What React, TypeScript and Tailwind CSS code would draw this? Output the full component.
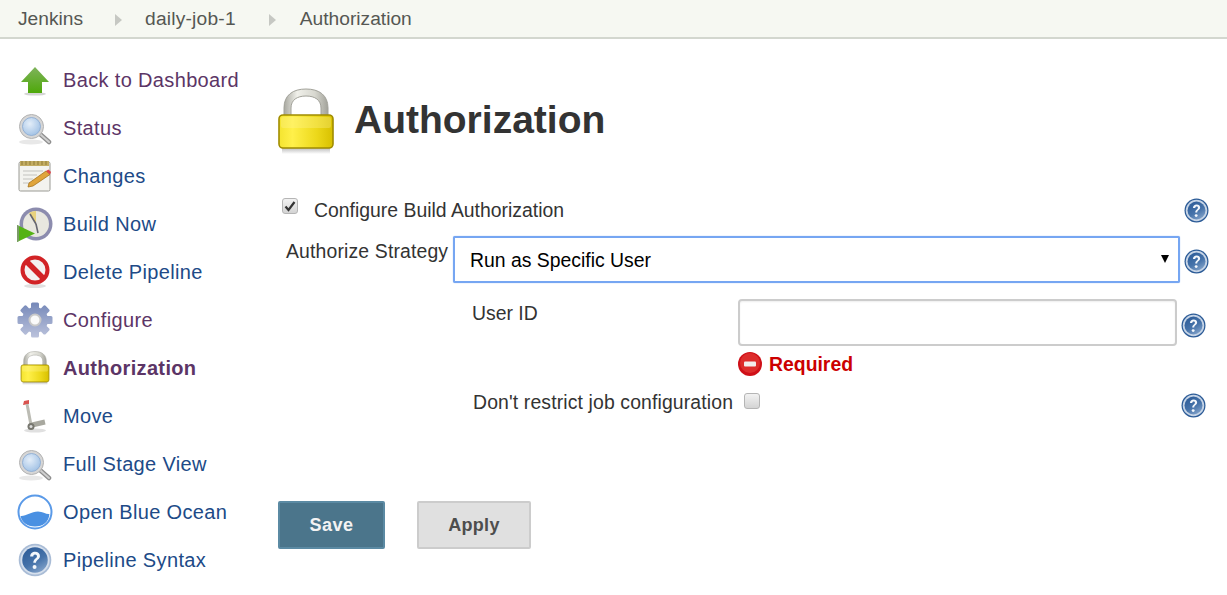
import type { ReactNode } from 'react'

function HelpIcon({ size = 25, soft }: { size?: number; soft?: boolean }) {
    return (
        <svg width={size} height={size} viewBox="0 0 24 24" className="shrink-0 blur-[0.3px]">
            <defs>
                <linearGradient id="helpFill" x1="0.2" x2="0.8" y1="0" y2="1">
                    <stop offset="0%" stopColor="#2d5c98" />
                    <stop offset="55%" stopColor="#4673aa" />
                    <stop offset="100%" stopColor="#86a5cb" />
                </linearGradient>
            </defs>
            <circle cx="12" cy="12" r="11.5" fill={soft ? '#a9bcd6' : '#2a5a96'} />
            <circle cx="12" cy="12" r="10.3" fill={soft ? '#d5dfec' : '#c6d4e6'} />
            <circle cx="12" cy="12" r={soft ? 9 : 8.6} fill="url(#helpFill)" />
            <path
                d="M8.6 9.6c0-2.1 1.5-3.4 3.5-3.4s3.4 1.2 3.4 3c0 2.5-2.8 2.6-2.8 4.8H10.8c0-3 2.6-3.1 2.6-4.7 0-.7-.6-1.2-1.3-1.2-.8 0-1.3.6-1.3 1.5z"
                fill="#f4f7fb"
            />
            <circle cx="11.7" cy="16.9" r="1.4" fill="#f4f7fb" />
        </svg>
    )
}

function LockIcon({ className, id }: { className: string; id: string }) {
    return (
        <svg viewBox="0 0 56 66" className={className}>
            <defs>
                <linearGradient id={`${id}-body`} x1="0" x2="1" y1="0" y2="0">
                    <stop offset="0%" stopColor="#f4e430" />
                    <stop offset="25%" stopColor="#fff04a" />
                    <stop offset="70%" stopColor="#ecd81a" />
                    <stop offset="100%" stopColor="#d8c000" />
                </linearGradient>
                <linearGradient id={`${id}-shackle`} x1="0" x2="1" y1="0" y2="0">
                    <stop offset="0%" stopColor="#a8a8a0" />
                    <stop offset="30%" stopColor="#f0f0ea" />
                    <stop offset="70%" stopColor="#d8d8d0" />
                    <stop offset="100%" stopColor="#a2a29a" />
                </linearGradient>
                <linearGradient id={`${id}-shadow`} x1="0" x2="0" y1="0" y2="1">
                    <stop offset="0%" stopColor="#bdbdbd" />
                    <stop offset="100%" stopColor="#ffffff" />
                </linearGradient>
            </defs>
            <path
                d="M6 30V20C6 7 15 1 28 1s22 6 22 19v10h-7V20c0-8-6-12-15-12s-15 4-15 12v10z"
                fill={`url(#${id}-shackle)`}
                stroke="#a2a29a"
                strokeWidth="1"
            />
            <rect x="4" y="60" width="48" height="6" fill={`url(#${id}-shadow)`} />
            <rect x="1" y="27" width="54" height="33" rx="4" fill={`url(#${id}-body)`} stroke="#a08c00" strokeWidth="1.6" />
            <rect x="3" y="29" width="50" height="11" rx="2" fill="#fff6a0" opacity="0.3" />
        </svg>
    )
}

function ArrowIcon() {
    return (
        <svg width="32" height="32" viewBox="0 0 32 32" className="blur-[0.3px]">
            <defs>
                <linearGradient id="arrowFill" x1="0" x2="0" y1="0" y2="1">
                    <stop offset="0%" stopColor="#7fb35c" />
                    <stop offset="100%" stopColor="#4ea809" />
                </linearGradient>
            </defs>
            <ellipse cx="16" cy="30" rx="11" ry="1.6" fill="#d4d4d4" />
            <path d="M16 3 L30 18 H23 V29 H9 V18 H2 Z" fill="url(#arrowFill)" />
        </svg>
    )
}

function SearchIcon({ id }: { id: string }) {
    return (
        <svg width="34" height="34" viewBox="0 0 34 34" className="blur-[0.3px]">
            <defs>
                <radialGradient id={id} cx="40%" cy="35%" r="65%">
                    <stop offset="0%" stopColor="#e4eef9" />
                    <stop offset="100%" stopColor="#a5c4e6" />
                </radialGradient>
            </defs>
            <ellipse cx="13" cy="31" rx="12" ry="2.5" fill="#e8e8e8" />
            <path d="M22 23 L31 31" stroke="#8f8f8f" strokeWidth="4.5" strokeLinecap="round" />
            <path d="M22 23 L31 31" stroke="#cfcfcf" strokeWidth="2" strokeLinecap="round" />
            <circle cx="13.5" cy="15.5" r="12" fill="#d6d6d6" stroke="#b2b2b2" strokeWidth="1" />
            <circle cx="13.5" cy="15.5" r="9" fill={`url(#${id})`} stroke="#86a8d2" strokeWidth="0.8" />
        </svg>
    )
}

function NotepadIcon() {
    return (
        <svg width="34" height="34" viewBox="0 0 34 34" className="blur-[0.3px]">
            <rect x="1" y="3" width="31" height="29" rx="1.5" fill="#f3f3ef" stroke="#9a9a94" />
            <rect x="2" y="2" width="29" height="5" fill="#c2ac62" />
            <path d="M4 2v4M8 2v4M12 2v4M16 2v4M20 2v4M24 2v4M28 2v4" stroke="#8f7a34" strokeWidth="1" />
            <path d="M5 12h20M5 16h14M5 20h10M5 24h8" stroke="#c4c4c0" strokeWidth="1.2" />
            <path d="M11 24 L28 12 L32 15.5 L15 27 L10 28 Z" fill="#e0a53c" stroke="#a7741c" strokeWidth="0.8" />
            <path d="M28 12 L32 15.5 L33 13 L30.5 10.5 Z" fill="#e0454a" />
        </svg>
    )
}

function BuildIcon() {
    return (
        <svg width="36" height="36" viewBox="0 0 36 36" className="blur-[0.3px]">
            <circle cx="19" cy="18" r="16.5" fill="#8c8cae" />
            <circle cx="19" cy="18" r="13" fill="#e8e7df" />
            <path d="M19 18 L12 7 A13 13 0 0 1 19 5 Z" fill="#e8d27e" />
            <path d="M19 18 L13 8 M19 18 L21 27" stroke="#666670" strokeWidth="1.6" />
            <path d="M0 19 L18 27.5 L0 36 Z" fill="#55b216" />
            <path d="M0 19 L0 36 L2 35 L2 20 Z" fill="#7a9a68" />
        </svg>
    )
}

function NoIcon() {
    return (
        <svg width="34" height="34" viewBox="0 0 34 34" className="blur-[0.3px]">
            <ellipse cx="17" cy="31" rx="11" ry="2" fill="#e0e0e0" />
            <circle cx="17" cy="15" r="12.5" fill="#f4f1f0" stroke="#d22326" strokeWidth="4" />
            <path d="M8 6 L26 24" stroke="#d22326" strokeWidth="5.5" />
        </svg>
    )
}

function GearIcon() {
    const teeth = [0, 45, 90, 135]
    return (
        <svg width="36" height="36" viewBox="0 0 36 36" className="blur-[0.3px]">
            <defs>
                <linearGradient id="gearFill" x1="0" x2="0" y1="0" y2="1">
                    <stop offset="0%" stopColor="#7487b8" />
                    <stop offset="100%" stopColor="#bcc3dc" />
                </linearGradient>
                <clipPath id="gearShape">
                    <circle cx="18" cy="18" r="13" />
                    {teeth.map((deg) => (
                        <rect key={deg} x="14" y="0.5" width="8" height="35" rx="1.5" transform={`rotate(${deg} 18 18)`} />
                    ))}
                </clipPath>
            </defs>
            <rect width="36" height="36" fill="url(#gearFill)" clipPath="url(#gearShape)" />
            <circle cx="18" cy="18" r="5.5" fill="#fafafa" stroke="#c9c9c9" strokeWidth="2" />
        </svg>
    )
}

function MoveIcon() {
    return (
        <svg width="30" height="34" viewBox="0 0 30 34" className="blur-[0.3px]">
            <path d="M4 2 L9 1 L9 5 L3 6 Z" fill="#d9534f" />
            <path d="M7 5 L11 26" stroke="#bcbcb4" strokeWidth="3" />
            <path d="M12 26 L25 23" stroke="#a8a89f" strokeWidth="5" />
            <ellipse cx="15" cy="31.5" rx="11" ry="2" fill="#e0e0e0" />
            <circle cx="11" cy="27.5" r="3.5" fill="#77776f" />
            <circle cx="11" cy="27.5" r="1.5" fill="#ddd" />
        </svg>
    )
}

function OceanIcon() {
    return (
        <svg width="36" height="36" viewBox="0 0 36 36">
            <circle cx="18" cy="18" r="16.5" fill="#fff" stroke="#5a9ae8" strokeWidth="2" />
            <path d="M3.6 22 C9 22.5 14 17.5 21 17.5 C26 17.5 29 20.5 32.4 20 C32 28 26 32.5 18 32.5 C10 32.5 4.5 28 3.6 22 Z" fill="#4a90e2" />
        </svg>
    )
}

function RedMinus() {
    return (
        <svg width="24" height="24" viewBox="0 0 24 24" className="shrink-0">
            <circle cx="12" cy="12" r="12" fill="#cf1018" />
            <circle cx="12" cy="11" r="10" fill="#dd2c2c" />
            <rect x="6" y="9.5" width="12" height="5" rx="1" fill="#f3eded" />
        </svg>
    )
}

function Checkbox({ checked }: { checked?: boolean }) {
    return (
        <span className="flex h-[16px] w-[16px] shrink-0 -translate-y-[4px] items-center justify-center rounded-[3px] border border-[#b5b5b5] bg-gradient-to-b from-[#f2f2f2] to-[#d4d4d4]">
            {checked && (
                <svg width="12" height="12" viewBox="0 0 12 12">
                    <path d="M1.5 6.5 L4.5 10 L10.5 2" fill="none" stroke="#333" strokeWidth="2.2" />
                </svg>
            )}
        </span>
    )
}

const navItems: { label: string; icon: ReactNode; color: string; bold?: boolean }[] = [
    { label: 'Back to Dashboard', icon: <ArrowIcon />, color: 'text-[#5c3566]' },
    { label: 'Status', icon: <SearchIcon id="searchA" />, color: 'text-[#5c3566]' },
    { label: 'Changes', icon: <NotepadIcon />, color: 'text-[#204a87]' },
    { label: 'Build Now', icon: <BuildIcon />, color: 'text-[#204a87]' },
    { label: 'Delete Pipeline', icon: <NoIcon />, color: 'text-[#204a87]' },
    { label: 'Configure', icon: <GearIcon />, color: 'text-[#5c3566]' },
    { label: 'Authorization', icon: <LockIcon className="h-[34px] w-[30px]" id="lockSmall" />, color: 'text-[#5c3566]', bold: true },
    { label: 'Move', icon: <MoveIcon />, color: 'text-[#204a87]' },
    { label: 'Full Stage View', icon: <SearchIcon id="searchB" />, color: 'text-[#204a87]' },
    { label: 'Open Blue Ocean', icon: <OceanIcon />, color: 'text-[#204a87]' },
    { label: 'Pipeline Syntax', icon: <HelpIcon size={34} soft />, color: 'text-[#204a87]' },
]

function Arrow({ className }: { className: string }) {
    return <span className={`h-0 w-0 border-y-[6px] border-l-[7px] border-y-transparent border-l-[#c6c8c3] ${className}`} />
}

function Breadcrumb() {
    return (
        <div className="flex h-[39px] items-center border-b-2 border-[#d3d7cf] bg-[#f6f8f2] pl-[18px] pt-[2px] text-[19.2px] text-[#555753]">
            <span>Jenkins</span>
            <Arrow className="ml-[32px] mr-[23px]" />
            <span className="tracking-[0.2px]">daily-job-1</span>
            <Arrow className="ml-[33px] mr-[24px]" />
            <span>Authorization</span>
        </div>
    )
}

export default function App() {
    return (
        <div className="h-[595px] w-[1227px] overflow-hidden bg-white font-['Liberation_Sans',Arial,sans-serif] text-[19.4px] text-[#333]">
            <Breadcrumb />
            <div className="flex">
                <aside className="w-[278px] shrink-0 pt-[17px] text-[20px] tracking-[0.35px]">
                    {navItems.map((item) => (
                        <div key={item.label} className="flex h-[48px] items-center">
                            <div className="ml-[17px] flex w-[36px] shrink-0 justify-center">{item.icon}</div>
                            <span className={`ml-[10px] ${item.color} ${item.bold ? 'font-bold' : ''}`}>{item.label}</span>
                        </div>
                    ))}
                </aside>

                <main className="flex-1 pr-[18px]">
                    <div className="flex items-center gap-[20px] pt-[49px]">
                        <LockIcon className="h-[66px] w-[56px]" id="lockLarge" />
                        <h1 className="-translate-y-[1px] text-[39px] font-bold text-[#333]">Authorization</h1>
                    </div>

                    <div className="mt-[44px] flex h-[24px] items-center">
                        <div className="ml-[4px] w-[32px]">
                            <Checkbox checked />
                        </div>
                        <span className="flex-1 pt-[2px]">Configure Build Authorization</span>
                        <HelpIcon />
                    </div>

                    <div className="mt-[14px] flex items-center">
                        <span className="mb-[16px] ml-[8px] w-[167px] shrink-0 tracking-[0.15px]">Authorize Strategy</span>
                        <div className="relative flex-1">
                            <select
                                defaultValue="user"
                                className="h-[47px] w-full appearance-none rounded-[2px] border-2 border-[#76a6f2] bg-white pl-[15px] pt-[2px] text-[19.4px] text-black shadow-[0_0_1px_#76a6f2]"
                            >
                                <option value="user">Run as Specific User</option>
                            </select>
                            <span className="absolute right-[11px] top-[19px] h-0 w-0 border-x-[4px] border-t-[8px] border-x-transparent border-t-black" />
                        </div>
                        <div className="ml-[4px] mt-[4px]">
                            <HelpIcon />
                        </div>
                    </div>

                    <div className="ml-[194px] mr-[3px] mt-[16px] flex">
                        <span className="w-[266px] shrink-0 leading-[28px]">User ID</span>
                        <div className="flex-1">
                            <input className="block h-[47px] w-full rounded-[4px] border-2 border-[#ccc] bg-white shadow-[inset_0_1px_2px_#eee]" />
                            <div className="mt-[6px] flex h-[24px] items-center gap-[7px] font-bold text-[#cc0000]">
                                <RedMinus />
                                <span className="pt-[2px]">Required</span>
                            </div>
                        </div>
                        <div className="ml-[4px] mt-[14px]">
                            <HelpIcon />
                        </div>
                    </div>

                    <div className="ml-[195px] mr-[3px] mt-[17px] flex h-[25px] items-center">
                        <span className="pb-[6px] tracking-[0.13px]">Don't restrict job configuration</span>
                        <div className="ml-[11px] flex-1 pb-[2px]">
                            <Checkbox />
                        </div>
                        <HelpIcon />
                    </div>

                    <div className="mt-[83px] flex gap-[32px] text-[18px] font-bold">
                        <button className="h-[48px] w-[107px] rounded-[2px] border-2 border-[#5b8aa3] bg-[#4b758b] tracking-[0.5px] text-[#f3f3f3]">
                            Save
                        </button>
                        <button className="h-[48px] w-[114px] rounded-[2px] border-2 border-[#ccc] bg-[#e0e0e0] tracking-[0.3px] text-[#4d4d4d]">
                            Apply
                        </button>
                    </div>
                </main>
            </div>
        </div>
    )
}
